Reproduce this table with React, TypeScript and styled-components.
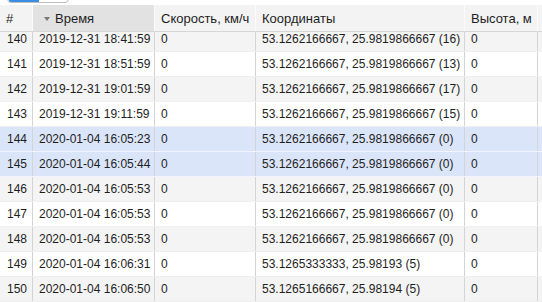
import { useEffect, useRef } from "react";
import styled, { createGlobalStyle } from "styled-components";

const GlobalStyle = createGlobalStyle`
  html, body {
    margin: 0;
    padding: 0;
    background: #fff;
    overflow: hidden;
  }
  body {
    font-family: "Liberation Sans", Arial, sans-serif;
    color: #1e1e1e;
  }
`;

const COLUMNS = "33px 122px 101px 209px 73px 1fr";

const Page = styled.div`
  width: 542px;
  height: 302px;
  display: flex;
  flex-direction: column;
  overflow: hidden;
`;

const TopStrip = styled.div`
  height: 5px;
  display: flex;
  align-items: flex-end;
  padding-left: 7px;
  overflow: hidden;
`;

const Switcher = styled.div`
  flex-shrink: 0;
  width: 62px;
  height: 22px;
  margin-bottom: 2px;
  box-sizing: border-box;
  border: 1px solid #bdbdbd;
  border-radius: 4px;
  display: flex;
  overflow: hidden;
  background: #fff;
`;

const SwitcherActive = styled.div`
  width: 30px;
  margin-left: 1px;
  border-bottom: 2px solid #3a8de0;
`;

const HeaderRow = styled.div`
  display: grid;
  grid-template-columns: ${COLUMNS};
  height: 27px;
  box-sizing: border-box;
  background: #f3f3f3;
  border-bottom: 1px solid #d6d6d6;
  font-size: 13px;
`;

const HeaderCell = styled.div<{ $sorted?: boolean }>`
  display: flex;
  align-items: center;
  gap: 5px;
  padding-left: ${(p) => (p.$sorted ? "11px" : "6px")};
  background: ${(p) => (p.$sorted ? "#e2e2e2" : "transparent")};
  border-right: 1px solid #fbfbfb;
  white-space: nowrap;
  overflow: hidden;
`;

const SortArrow = styled.span`
  width: 0;
  height: 0;
  border-left: 3px solid transparent;
  border-right: 3px solid transparent;
  border-top: 4px solid #7a7a7a;
  margin-top: 1px;
`;

const Body = styled.div`
  flex: 1;
  overflow: hidden;
`;

const Row = styled.div<{ $tone: "white" | "gray" | "selected" }>`
  display: grid;
  grid-template-columns: ${COLUMNS};
  height: 25px;
  box-sizing: border-box;
  border-bottom: 1px solid
    ${(p) => (p.$tone === "selected" ? "#f2f5fd" : "#efefef")};
  background: ${(p) =>
    p.$tone === "selected" ? "#dbe5fa" : p.$tone === "gray" ? "#f4f4f4" : "#fff"};
  font-size: 12px;
`;

const Cell = styled.div`
  display: flex;
  align-items: center;
  padding-left: 6px;
  border-right: 1px solid #d4d4d4;
  white-space: nowrap;
  overflow: hidden;
`;

const NumCell = styled(Cell)`
  padding-left: 7px;
`;

const Filler = styled.div`
  border-left: 1px solid #d4d4d4;
  margin-left: -1px;
`;

type Track = { n: number; time: string; speed: string; coords: string; alt: string };

const rows: Track[] = [
  { n: 140, time: "2019-12-31 18:41:59", speed: "0", coords: "53.1262166667, 25.9819866667 (16)", alt: "0" },
  { n: 141, time: "2019-12-31 18:51:59", speed: "0", coords: "53.1262166667, 25.9819866667 (13)", alt: "0" },
  { n: 142, time: "2019-12-31 19:01:59", speed: "0", coords: "53.1262166667, 25.9819866667 (17)", alt: "0" },
  { n: 143, time: "2019-12-31 19:11:59", speed: "0", coords: "53.1262166667, 25.9819866667 (15)", alt: "0" },
  { n: 144, time: "2020-01-04 16:05:23", speed: "0", coords: "53.1262166667, 25.9819866667 (0)", alt: "0" },
  { n: 145, time: "2020-01-04 16:05:44", speed: "0", coords: "53.1262166667, 25.9819866667 (0)", alt: "0" },
  { n: 146, time: "2020-01-04 16:05:53", speed: "0", coords: "53.1262166667, 25.9819866667 (0)", alt: "0" },
  { n: 147, time: "2020-01-04 16:05:53", speed: "0", coords: "53.1262166667, 25.9819866667 (0)", alt: "0" },
  { n: 148, time: "2020-01-04 16:05:53", speed: "0", coords: "53.1262166667, 25.9819866667 (0)", alt: "0" },
  { n: 149, time: "2020-01-04 16:06:31", speed: "0", coords: "53.1265333333, 25.98193 (5)", alt: "0" },
  { n: 150, time: "2020-01-04 16:06:50", speed: "0", coords: "53.1265166667, 25.98194 (5)", alt: "0" },
];

const selected = [144, 145];

export default function App() {
  const bodyRef = useRef<HTMLDivElement>(null);

  useEffect(() => {
    // table is scrolled a little, first row is partly under the header
    if (bodyRef.current) bodyRef.current.scrollTop = 6;
  }, []);

  return (
    <Page>
      <GlobalStyle />
      <TopStrip>
        <Switcher>
          <SwitcherActive />
        </Switcher>
      </TopStrip>
      <HeaderRow>
        <HeaderCell>#</HeaderCell>
        <HeaderCell $sorted>
          <SortArrow />
          Время
        </HeaderCell>
        <HeaderCell>Скорость, км/ч</HeaderCell>
        <HeaderCell>Координаты</HeaderCell>
        <HeaderCell>Высота, м</HeaderCell>
        <div />
      </HeaderRow>
      <Body ref={bodyRef}>
        {rows.map((r) => (
          <Row
            key={r.n}
            $tone={selected.includes(r.n) ? "selected" : r.n % 2 === 0 ? "gray" : "white"}
          >
            <NumCell>{r.n}</NumCell>
            <Cell>{r.time}</Cell>
            <Cell>{r.speed}</Cell>
            <Cell>{r.coords}</Cell>
            <Cell>{r.alt}</Cell>
            <Filler />
          </Row>
        ))}
      </Body>
    </Page>
  );
}
